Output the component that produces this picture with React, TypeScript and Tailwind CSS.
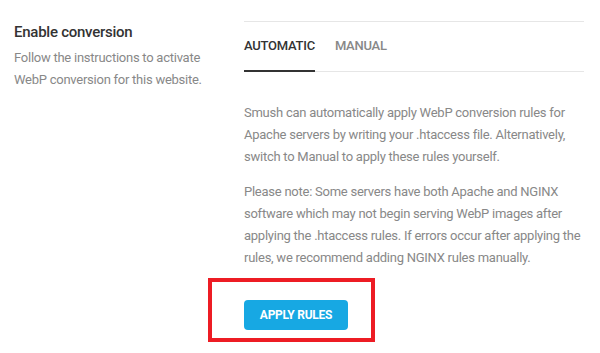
import { useState } from 'react'

export default function App() {
  const [tab, setTab] = useState<'automatic' | 'manual'>('automatic')

  return (
    <div className="relative w-[600px] h-[353px] bg-white font-['Roboto',sans-serif] tracking-[-0.25px] overflow-hidden">
      <div className="flex pt-[21px] pl-[14px] pr-[16px]">
        <div className="w-[230px] shrink-0">
          <h3 className="text-[15px] leading-[22px] font-medium text-[#333]">Enable conversion</h3>
          <p className="mt-[4px] text-[13px] leading-[22px] text-[#888]">
            Follow the instructions to activate
            <br />
            WebP conversion for this website.
          </p>
        </div>

        <div className="w-[340px] border-t border-[#e6e6e6]">
          <div className="flex gap-[20px] border-b border-[#e6e6e6]">
            <button
              className={`-mb-px h-[50px] border-b-2 text-[13px] font-medium uppercase ${
                tab === 'automatic' ? 'border-[#333] text-[#333]' : 'border-transparent text-[#888]'
              }`}
              onClick={() => setTab('automatic')}
            >
              Automatic
            </button>
            <button
              className={`-mb-px h-[50px] border-b-2 text-[13px] font-medium uppercase ${
                tab === 'manual' ? 'border-[#333] text-[#333]' : 'border-transparent text-[#888]'
              }`}
              onClick={() => setTab('manual')}
            >
              Manual
            </button>
          </div>

          <div className="pt-[30px] text-[13px] leading-[22px] text-[#888]">
            <p>
              Smush can automatically apply WebP conversion rules for Apache servers by writing your .htaccess file.
              Alternatively, switch to Manual to apply these rules yourself.
            </p>
            <p className="mt-[13px]">
              Please note: Some servers have both Apache and NGINX software which may not begin serving WebP images
              after applying the .htaccess rules. If errors occur after applying the rules, we recommend adding NGINX
              rules manually.
            </p>
          </div>

          <button className="mt-[31px] h-[30px] w-[104px] rounded-[4px] bg-[#17a8e3] text-[12px] font-bold uppercase text-white">
            Apply rules
          </button>
        </div>
      </div>

      {/* red highlight annotation */}
      <div className="pointer-events-none absolute left-[208px] top-[278px] h-[64px] w-[167px] border-[4px] border-[#ed1c24]" />
    </div>
  )
}
